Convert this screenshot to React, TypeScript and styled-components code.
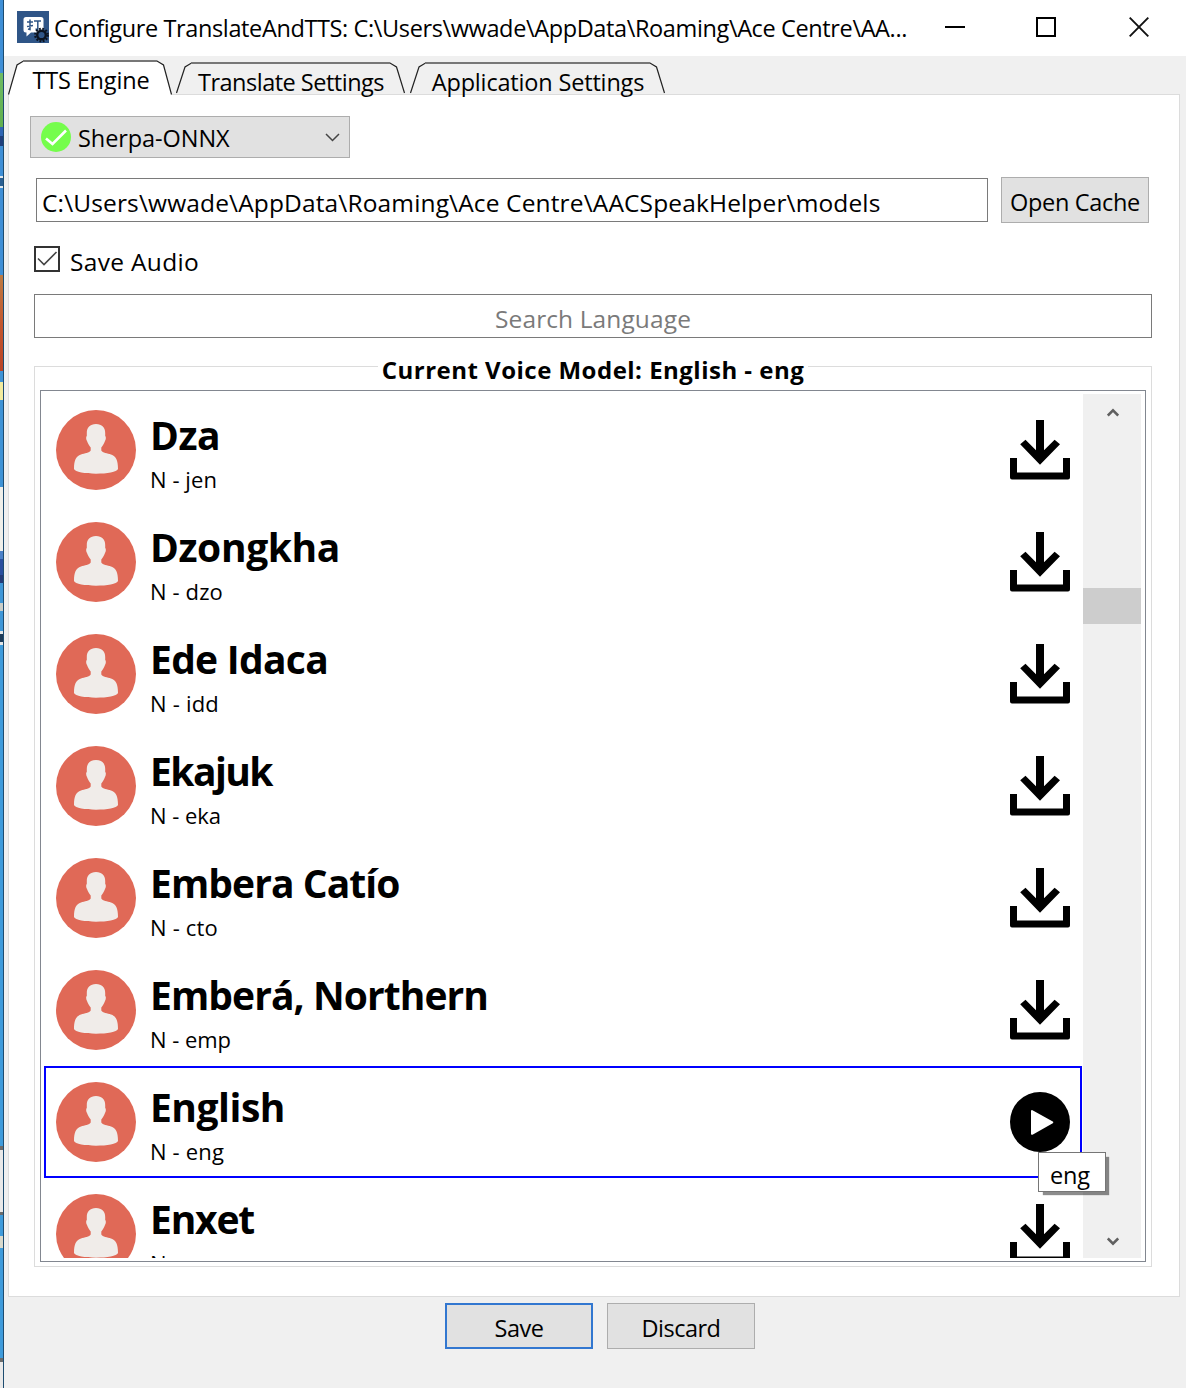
import React, { useLayoutEffect, useRef, useState } from "react";
import styled, { createGlobalStyle, css } from "styled-components";

const GlobalStyle = createGlobalStyle`
  * { box-sizing: border-box; }
  html, body { margin: 0; padding: 0; background: #f0f0f0; }
  body { font-family: "Open Sans", "Noto Sans", sans-serif; font-size: 23.5px; color: #000; overflow: hidden; }
`;

const Screen = styled.div`
  display: flex;
  width: 1186px;
  height: 1388px;
  overflow: hidden;
`;

const DesktopEdge = styled.div`
  flex: none;
  width: 4px;
  border-right: 1px solid #1d4c70;
  background: linear-gradient(
    #3f8fd6 0 73px, #6dbb63 73px, #62b04f 127px, #2f66b4 127px 136px, #1f3f7c 136px 146px,
    #3f8fd6 146px 176px, #dfe8ee 176px 178px, #2a5f92 178px 186px, #dfe8ee 186px 188px,
    #3f8fd6 188px 275px, #bd7b42 275px, #c2562e 325px, #b94427 371px,
    #3f93d6 371px 382px, #f2eb9e 382px 400px, #3f93d6 400px 487px, #efefea 487px 551px,
    #4a80c8 551px 559px, #2a4f9f 559px 575px, #243b78 575px 583px, #3f97d8 583px 603px,
    #c9cdc8 603px 611px, #3f97d8 611px 631px, #e3e6e8 631px 634px, #1c3a58 634px 642px,
    #e3e6e8 642px 645px, #3f9bdb 645px 1146px, #6b6b6b 1146px 1150px, #e9e9e9 1150px 1212px,
    #6b6b6b 1212px 1215px, #3f9bdb 1215px 1236px, #d9d9cc 1236px 1248px, #3f9bdb 1248px 1358px,
    #6b6b6b 1358px 1362px, #e9e9e9 1362px
  );
`;

const Window = styled.main`
  flex: 1;
  min-width: 0;
  display: flex;
  flex-direction: column;
  background: #f0f0f0;
`;

const TitleBar = styled.header`
  height: 56px;
  flex: none;
  display: flex;
  align-items: center;
  background: #fff;
  padding: 0 30px 2px 13px;
`;

const TitleText = styled.h1`
  flex: 1;
  margin: 2px 0 0 5px;
  font-size: 23.5px;
  font-weight: 400;
`;

const WindowControls = styled.div`
  display: flex;
  gap: 71px;
  padding-right: 7px;
`;

const Tabs = styled.nav`
  height: 38px;
  flex: none;
  display: flex;
  align-items: flex-end;
  padding-left: 4px;
`;

const TabItem = styled.div<{ $active?: boolean; $width: number; $gap: number }>`
  position: relative;
  width: ${(p) => p.$width}px;
  height: ${(p) => (p.$active ? 34 : 32)}px;
  margin-left: ${(p) => p.$gap}px;
  padding-left: 2px;
  display: flex;
  justify-content: center;
  line-height: 40px;
  z-index: 1;
`;

const TabOutline = styled.svg`
  position: absolute;
  left: 0;
  top: 0;
  overflow: visible;
`;

const TabText = styled.span`
  position: relative;
`;

const Pane = styled.section`
  flex: none;
  height: 1203px;
  margin: 0 6px 0 4px;
  padding: 21px 27px 29px 21px;
  border: 1px solid #dcdcdc;
  background: #fff;
  display: flex;
  flex-direction: column;
`;

const buttonFace = css`
  border: 1px solid #adadad;
  background: #e1e1e1;
`;

const EngineSelect = styled.div`
  ${buttonFace}
  width: 320px;
  height: 42px;
  display: flex;
  align-items: center;
  padding: 0 9px 0 10px;
`;

const EngineName = styled.span`
  flex: 1;
  margin-left: 7px;
  padding-top: 2px;
`;

const PathRow = styled.div`
  display: flex;
  align-items: center;
  justify-content: space-between;
  margin: 19px 3px 0 6px;
`;

const PathInput = styled.div`
  width: 952px;
  height: 44px;
  border: 1px solid #7a7a7a;
  padding: 3px 0 0 5px;
  line-height: 42px;
  font-size: 24.5px;
`;

const Button = styled.button<{ $primary?: boolean }>`
  ${buttonFace}
  ${(p) => p.$primary && css`border: 2px solid #3277d0;`}
  width: 148px;
  height: 46px;
  padding: 3px 0 0;
  font: inherit;
  color: #000;
  display: flex;
  align-items: center;
  justify-content: center;
`;

const CheckRow = styled.label`
  display: flex;
  align-items: center;
  gap: 10px;
  margin: 22px 0 0 4px;
  height: 28px;
  font-size: 24.5px;
`;

const CheckText = styled.span`
  padding-top: 5px;
`;

const SearchInput = styled.div`
  height: 44px;
  margin: 21px 0 0 4px;
  border: 1px solid #7a7a7a;
  display: flex;
  align-items: center;
  justify-content: center;
  padding-top: 5px;
  font-size: 24.5px;
  color: #7a7a7a;
`;

const Group = styled.fieldset`
  flex: 1;
  min-height: 0;
  margin: 12px 0 0 4px;
  padding: 7px 5px 4px 5px;
  border: 1px solid #dcdcdc;
  display: flex;
`;

const GroupTitle = styled.legend`
  margin: 0 auto;
  padding: 3px 4px 0;
  height: 33px;
  line-height: 33px;
  font-size: 24px;
  font-weight: 700;
`;

const ListBox = styled.div`
  position: relative;
  flex: 1;
  height: 872px;
  border: 1px solid #828790;
  padding: 3px 4px 3px 3px;
  display: flex;
  justify-content: space-between;
`;

const Rows = styled.div`
  width: 1038px;
  height: 864px;
  overflow: hidden;
`;

const Row = styled.div<{ $selected?: boolean }>`
  height: 112px;
  border: 2px solid ${(p) => (p.$selected ? "#0000ff" : "transparent")};
  padding: 0 10px;
  display: flex;
  align-items: center;
`;

const RowText = styled.div`
  flex: 1;
  height: 108px;
  padding: 14px 0 0 14px;
`;

const VoiceName = styled.div`
  height: 50px;
  line-height: 50px;
  font-size: 39px;
  font-weight: 700;
`;

const VoiceCode = styled.div`
  height: 38px;
  line-height: 38px;
  font-size: 22px;
`;

const Tooltip = styled.div`
  position: absolute;
  left: 997px;
  top: 761px;
  width: 68px;
  height: 40px;
  border: 1px solid #767676;
  background: #fff;
  padding: 4px 0 0 11px;
  line-height: 36px;
  box-shadow: 4px 4px 1px -1px rgba(0, 0, 0, 0.45);
`;

const ScrollBar = styled.div`
  width: 58px;
  height: 864px;
  background: #f0f0f0;
  display: flex;
  flex-direction: column;
  align-items: center;
  padding: 13px 0 11px 1px;
`;

const Thumb = styled.div`
  width: 58px;
  height: 36px;
  margin: 171px 0 auto -1px;
  background: #cdcdcd;
`;

const Footer = styled.footer`
  display: flex;
  gap: 14px;
  padding: 6px 0 0 441px;
`;

const FitSpan = styled.span`
  display: inline-block;
  white-space: pre;
`;

/* Keeps a label at a fixed advance width by spreading the difference over its letters. */
function Label({ width, children }: { width: number; children: string }) {
  const ref = useRef<HTMLSpanElement>(null);
  const [spacing, setSpacing] = useState(0);
  useLayoutEffect(() => {
    if (ref.current) {
      setSpacing((width - ref.current.getBoundingClientRect().width) / children.length);
    }
  }, [width, children]);
  return (
    <FitSpan ref={ref} style={{ letterSpacing: spacing }}>
      {children}
    </FitSpan>
  );
}

function AppIcon() {
  return (
    <svg width="32" height="32" viewBox="0 0 32 32">
      <rect width="32" height="32" fill="#2f5587" />
      <path d="M9 6H24A2.500 2.500 0 0 1 26.500 8.500V19A2.500 2.500 0 0 1 24 21.500H14L9.500 25.500V21.500H9A2.500 2.500 0 0 1 6.500 19V8.500A2.500 2.500 0 0 1 9 6Z" fill="#fff" />
      <path d="M10 11H16M10 15.500L16 14.500M13 8.500V18.500L11 18M17 10H24M20.800 10V18.500L18.500 18" stroke="#2f5587" strokeWidth="1.500" fill="none" />
      <circle cx="24.500" cy="24" r="6.300" fill="none" stroke="#0b1320" strokeWidth="2.200" strokeDasharray="1.800 1.500" />
      <circle cx="24.500" cy="24" r="4.300" fill="#2f5587" stroke="#0b1320" strokeWidth="2.400" />
    </svg>
  );
}

type TabProps = { label: string; textWidth: number; width: number; gap: number; active?: boolean };

function Tab({ label, textWidth, width: w, gap, active }: TabProps) {
  const h = active ? 34.5 : 31;
  const pts = `0.500,${h} 9,5 15.500,1 ${w - 15},1 ${w - 8.5},5 ${w - 0.5},${h}`;
  return (
    <TabItem $active={active} $width={w} $gap={gap}>
      <TabOutline width={w} height={h + 1}>
        <polygon points={pts} fill={active ? "#fff" : "#f0f0f0"} />
        {active && <rect x="1" y={h - 1} width={w - 2} height="2.500" fill="#fff" />}
        <polyline points={pts} fill="none" stroke="#222" strokeWidth="1.200" />
        <path d={`M15 1H${w - 15}`} stroke="#777" strokeWidth="2" />
      </TabOutline>
      <TabText>
        <Label width={textWidth}>{label}</Label>
      </TabText>
    </TabItem>
  );
}

function Avatar() {
  return (
    <svg width="80" height="80" viewBox="0 0 80 80">
      <circle cx="40" cy="40" r="40" fill="#e06957" />
      <path
        fill="#f0ece9"
        d="M40 14C46 14 49.200 17.500 49.200 23V26C50.200 26.500 50 29.500 49 31C48 34 46.500 36 45.300 37.500V40.500C46.500 43 51.500 43.300 55 44.500C60 46.200 62 50 62 59C61 62 51 63.700 40 63.700C29 63.700 19 62 18 59C18 50 20 46.200 25 44.500C28.500 43.300 33.500 43 34.700 40.500V37.500C33.500 36 32 34 31 31C30 29.500 29.800 26.500 30.800 26V23C30.800 17.500 34 14 40 14Z"
      />
    </svg>
  );
}

function DownloadIcon() {
  return (
    <svg width="60" height="60" viewBox="0 0 60 60">
      <path d="M26 0H34V30.200L44.600 19.700 50 24.300 30 44.800 10.200 24.300 15.500 19.700 26 30.200Z" />
      <path d="M0 38H7V52.500H53V38H60V57.500A2 2 0 0 1 58 59.500H2A2 2 0 0 1 0 57.500Z" />
    </svg>
  );
}

function PlayIcon() {
  return (
    <svg width="60" height="60" viewBox="0 0 60 60">
      <circle cx="30" cy="30" r="30" />
      <path d="M22 19L42.300 30.300L22 41.800Z" fill="#fff" stroke="#fff" strokeWidth="2" strokeLinejoin="round" />
    </svg>
  );
}

function ScrollArrow({ down }: { down?: boolean }) {
  return (
    <svg width="12" height="10" viewBox="0 0 12 10">
      <path d={down ? "M0.800 1.500L6 6.700L11.200 1.500" : "M0.800 8.500L6 3.300L11.200 8.500"} fill="none" stroke="#606060" strokeWidth="2.600" />
    </svg>
  );
}

const voices = [
  { name: "Dza", nameWidth: 70, code: "N - jen", codeWidth: 67 },
  { name: "Dzongkha", nameWidth: 190, code: "N - dzo", codeWidth: 73 },
  { name: "Ede Idaca", nameWidth: 178, code: "N - idd", codeWidth: 69 },
  { name: "Ekajuk", nameWidth: 122, code: "N - eka", codeWidth: 71 },
  { name: "Embera Catío", nameWidth: 249.5, code: "N - cto", codeWidth: 68 },
  { name: "Emberá, Northern", nameWidth: 338, code: "N - emp", codeWidth: 81 },
  { name: "English", nameWidth: 135, code: "N - eng", codeWidth: 74, selected: true },
  { name: "Enxet", nameWidth: 104, code: "N - enx", codeWidth: 73 },
];

export default function App() {
  return (
    <Screen>
      <GlobalStyle />
      <DesktopEdge />
      <Window>
        <TitleBar>
          <AppIcon />
          <TitleText>
            <Label width={853}>{"Configure TranslateAndTTS: C:\\Users\\wwade\\AppData\\Roaming\\Ace Centre\\AA..."}</Label>
          </TitleText>
          <WindowControls>
            <svg width="20" height="20"><path d="M0 10H20" stroke="#000" strokeWidth="2" /></svg>
            <svg width="20" height="20"><rect x="1" y="1" width="18" height="18" fill="none" stroke="#000" strokeWidth="2" /></svg>
            <svg width="22" height="20"><path d="M2.700 0.700L21.300 19.300M21.300 0.700L2.700 19.300" stroke="#111" strokeWidth="1.900" /></svg>
          </WindowControls>
        </TitleBar>
        <Tabs>
          <Tab label="TTS Engine" textWidth={117} width={164} gap={0} active />
          <Tab label="Translate Settings" textWidth={186} width={229} gap={3.5} />
          <Tab label="Application Settings" textWidth={212.5} width={255} gap={5} />
        </Tabs>
        <Pane>
          <EngineSelect>
            <svg width="30" height="30" viewBox="0 0 30 30">
              <circle cx="15" cy="15" r="15" fill="#75fd4c" />
              <path d="M5 16.500L11.500 22L25 8.500" fill="none" stroke="#fff" strokeWidth="2.600" />
            </svg>
            <EngineName>
              <Label width={151.5}>Sherpa-ONNX</Label>
            </EngineName>
            <svg width="15" height="10"><path d="M1 2L7.500 8.500L14 2" fill="none" stroke="#444" strokeWidth="1.500" /></svg>
          </EngineSelect>
          <PathRow>
            <PathInput>
              <Label width={838.5}>{"C:\\Users\\wwade\\AppData\\Roaming\\Ace Centre\\AACSpeakHelper\\models"}</Label>
            </PathInput>
            <Button>
              <Label width={130}>Open Cache</Label>
            </Button>
          </PathRow>
          <CheckRow>
            <svg width="26" height="26">
              <rect x="1" y="1" width="24" height="24" fill="#fff" stroke="#333" strokeWidth="2" />
              <path d="M4 12.500L10 18.500L22.500 6" fill="none" stroke="#444" strokeWidth="1.600" />
            </svg>
            <CheckText>
              <Label width={129}>Save Audio</Label>
            </CheckText>
          </CheckRow>
          <SearchInput>
            <Label width={196}>Search Language</Label>
          </SearchInput>
          <Group>
            <GroupTitle>
              <Label width={422.5}>Current Voice Model: English - eng</Label>
            </GroupTitle>
            <ListBox>
              <Rows>
                {voices.map((v) => (
                  <Row key={v.name} $selected={v.selected}>
                    <Avatar />
                    <RowText>
                      <VoiceName><Label width={v.nameWidth}>{v.name}</Label></VoiceName>
                      <VoiceCode><Label width={v.codeWidth}>{v.code}</Label></VoiceCode>
                    </RowText>
                    {v.selected ? <PlayIcon /> : <DownloadIcon />}
                  </Row>
                ))}
              </Rows>
              <ScrollBar>
                <ScrollArrow />
                <Thumb />
                <ScrollArrow down />
              </ScrollBar>
              <Tooltip><Label width={40}>eng</Label></Tooltip>
            </ListBox>
          </Group>
        </Pane>
        <Footer>
          <Button $primary><Label width={49}>Save</Label></Button>
          <Button><Label width={79}>Discard</Label></Button>
        </Footer>
      </Window>
    </Screen>
  );
}
